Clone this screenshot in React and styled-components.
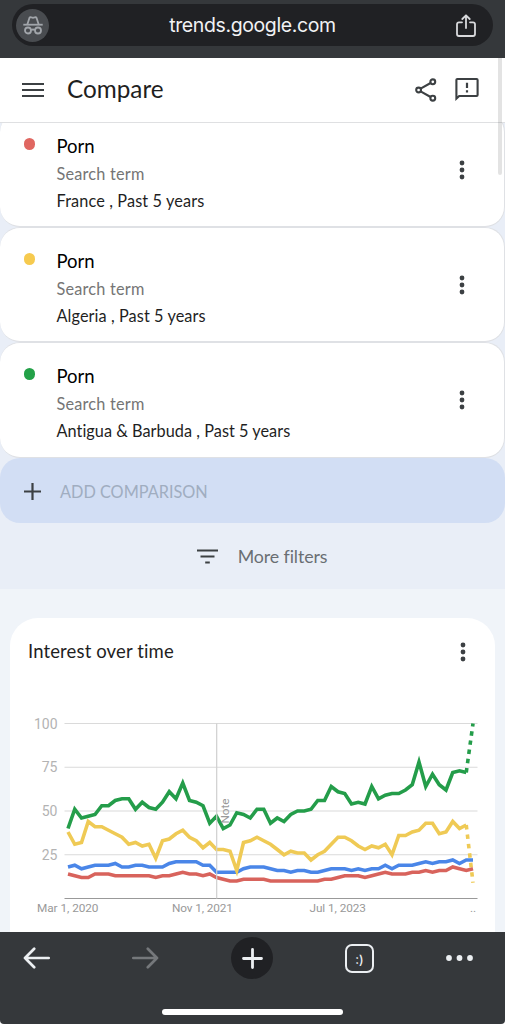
import React from 'react';
import styled, { createGlobalStyle } from 'styled-components';

const Global = createGlobalStyle`
  *, *::before, *::after { box-sizing: border-box; }
  body { margin: 0; background: #fff; }
`;

const Screen = styled.div`
  position: relative;
  width: 505px;
  height: 1024px;
  display: flex;
  flex-direction: column;
  overflow: hidden;
  font-family: Lato, 'Open Sans', sans-serif;
  font-variant-ligatures: none;
  color: #1f1f1f;
`;

const Label = styled.span`
  font-size: ${(p) => p.$size}px;
  line-height: ${(p) => p.$line || 27}px;
  letter-spacing: ${(p) => p.$track || 0}px;
  color: ${(p) => p.$color || '#1f1f1f'};
  white-space: nowrap;
`;

const BrowserBar = styled.div`
  flex: none;
  height: 58px;
  padding: 4px 12px 12px;
  background: #35383b;
`;

const AddressPill = styled.div`
  height: 42px;
  border-radius: 21px;
  background: #202124;
  display: grid;
  grid-template-columns: 42px 1fr 42px;
  align-items: center;
  padding: 0 6px 0 4px;
`;

const Incognito = styled.div`
  width: 33px;
  height: 33px;
  border-radius: 50%;
  background: #494c50;
  display: flex;
  align-items: center;
  justify-content: center;
`;

const Address = styled.span`
  font-family: Inter, sans-serif;
  font-size: 19.5px;
  letter-spacing: -0.38px;
  line-height: 42px;
  padding-left: 2px;
  text-align: center;
  color: #f1f2f4;
`;

const ShareSlot = styled.div`
  display: flex;
  justify-content: center;
`;

const Header = styled.header`
  flex: none;
  height: 65px;
  padding: 0 26px 0 22px;
  background: #fff;
  border-bottom: 1px solid #dfe0e2;
  display: flex;
  align-items: center;
  z-index: 1;
`;

const Title = styled(Label)`
  flex: 1;
  margin: -3px 0 0 23px;
`;

const HeaderActions = styled.div`
  display: flex;
  align-items: center;
  gap: 18px;
`;

const FeedbackSlot = styled.div`
  display: flex;
  margin-top: -2px;
`;

const Terms = styled.section`
  flex: none;
  height: 466px;
  background: #e9eef7;
  overflow: hidden;
`;

const TermCard = styled.article`
  height: 115.2px;
  margin-top: ${(p) => (p.$tucked ? '-11px' : '0')};
  padding: 20px 39.5px 0 23.5px;
  display: flex;
  background: #fff;
  border: 1px solid #dfe1e5;
  border-left: 0;
  border-radius: 20px;
`;

const Dot = styled.span`
  width: 11.5px;
  height: 11.5px;
  margin-top: 5px;
  border-radius: 50%;
  background: ${(p) => p.$color};
`;

const TermText = styled.div`
  flex: 1;
  margin-left: 21.5px;
  display: flex;
  flex-direction: column;
`;

const MenuSlot = styled.div`
  margin-top: 27px;
`;

const AddComparison = styled.div`
  height: 65.8px;
  padding: 3px 24px 0;
  border-radius: 20px;
  background: #d2def4;
  display: flex;
  align-items: center;
  gap: 19px;
`;

const Filters = styled.div`
  height: 66px;
  padding-left: 19px;
  display: flex;
  align-items: center;
  justify-content: center;
  gap: 20px;
`;

const Content = styled.main`
  flex: 1;
  min-height: 0;
  padding: 29px 10px 0 9.5px;
  background: #f0f4f9;
`;

const ChartCard = styled.section`
  height: 100%;
  border-radius: 28px 28px 0 0;
  background: #fff;
`;

const ChartHeader = styled.div`
  height: 67px;
  padding: 0 29.5px 0 18.5px;
  display: flex;
  align-items: center;
  justify-content: space-between;
`;

const Plot = styled.svg`
  display: block;
  width: 486px;
  height: 246px;
  font-family: Roboto, sans-serif;
`;

const BottomBar = styled.footer`
  flex: none;
  height: 92px;
  padding: 5px 32px 0 23px;
  background: #35383b;
  border-radius: 0 0 4px 4px;
`;

const NavRow = styled.nav`
  height: 42px;
  display: flex;
  align-items: center;
  gap: 72px;
`;

const BackSlot = styled.div`
  display: flex;
  margin-right: 8px;
`;

const NewTab = styled.div`
  width: 42px;
  height: 42px;
  border-radius: 50%;
  background: #202124;
  display: flex;
  align-items: center;
  justify-content: center;
`;

const Tabs = styled.div`
  width: 29px;
  height: 29px;
  border: 2.5px solid #eceff2;
  border-radius: 7px;
  color: #eceff2;
  font: 500 12.5px/27px Inter, sans-serif;
  text-align: center;
`;

const HomeIndicator = styled.div`
  width: 181px;
  height: 6px;
  margin: 30px 0 0 139px;
  border-radius: 3px;
  background: #fff;
`;

const ScrollThumb = styled.div`
  position: absolute;
  top: 58px;
  left: 498px;
  width: 3.5px;
  height: 117px;
  border-radius: 0 0 2px 2px;
  background: rgba(0, 0, 0, 0.11);
  z-index: 2;
`;

const IncognitoIcon = () => (
  <svg width="20" height="19" viewBox="0 0 20 19" fill="none" stroke="#a2a6ab" strokeWidth="1.8">
    <path d="M.3 8.7h19.4" />
    <path d="M4.4 8.2L6.5 1.8Q6.8.9 7.6 1.2L10 1.9L12.4 1.2Q13.2.9 13.5 1.8L15.6 8.2" />
    <circle cx="5" cy="14.5" r="3" />
    <circle cx="15" cy="14.5" r="3" />
    <path d="M8 14.1Q10 12.9 12 14.1" />
  </svg>
);

const ExportIcon = () => (
  <svg width="20" height="23" viewBox="0 0 20 23" fill="none" stroke="#d8d9dc" strokeWidth="1.8" strokeLinecap="round" strokeLinejoin="round">
    <path d="M6 8.3H3Q1 8.3 1 10.3V20Q1 22 3 22H17Q19 22 19 20V10.3Q19 8.3 17 8.3H14" />
    <path d="M10 14V1.5M6.3 5L10 1.3L13.7 5" />
  </svg>
);

const MenuIcon = () => (
  <svg width="22" height="16" viewBox="0 0 22 16" stroke="#3c4043" strokeWidth="2">
    <path d="M0 2h22M0 8h22M0 14h22" />
  </svg>
);

const ShareIcon = () => (
  <svg width="22" height="24" viewBox="0 0 22 24" fill="none" stroke="#3c4043" strokeWidth="2.1">
    <path d="M5.6 10.7L15.6 5M5.6 13.3L15.6 19" />
    <circle cx="3.6" cy="12" r="2.4" />
    <circle cx="17.8" cy="3.8" r="2.4" />
    <circle cx="17.8" cy="20.2" r="2.4" />
  </svg>
);

const FeedbackIcon = () => (
  <svg width="24" height="24" viewBox="0 0 24 24" fill="none" stroke="#3c4043" strokeWidth="2.1">
    <path d="M1.4 21.6V3Q1.4 2 2.4 2H21.6Q22.6 2 22.6 3V18Q22.6 19 21.6 19H4.2Z" />
    <path d="M12 5.8v5.2M12 13.2v2.4" strokeWidth="2.2" />
  </svg>
);

const Kebab = styled.svg`
  display: block;
`;

const MoreIcon = () => (
  <Kebab width="6" height="20" viewBox="0 0 6 20" fill="#3c4043">
    <circle cx="3" cy="3" r="2.4" />
    <circle cx="3" cy="10" r="2.4" />
    <circle cx="3" cy="17" r="2.4" />
  </Kebab>
);

const PlusIcon = ({ size, color, width, round }) => (
  <svg width={size} height={size} viewBox={`0 0 ${size} ${size}`} stroke={color} strokeWidth={width} strokeLinecap={round ? 'round' : 'butt'}>
    <path d={`M${round ? 1.5 : 0} ${size / 2}H${size - (round ? 1.5 : 0)}M${size / 2} ${round ? 1.5 : 0}V${size - (round ? 1.5 : 0)}`} />
  </svg>
);

const FilterIcon = () => (
  <svg width="21" height="15" viewBox="0 0 21 15" stroke="#3c4043" strokeWidth="2.1">
    <path d="M0 1.5h21M3.5 7.5h14M8.2 13.5h4.6" />
  </svg>
);

const ArrowIcon = ({ color, flip }) => (
  <svg width="28" height="22" viewBox="0 0 28 22" fill="none" stroke={color} strokeWidth="2.7" strokeLinecap="round" strokeLinejoin="round">
    <path d={flip ? 'M2.3 11H26M16.8 1.8L26 11L16.8 20.2' : 'M25.7 11H2M11.2 1.8L2 11L11.2 20.2'} />
  </svg>
);

const DotsIcon = () => (
  <svg width="27" height="6" viewBox="0 0 27 6" fill="#eceff2">
    <circle cx="3" cy="3" r="2.9" />
    <circle cx="13.5" cy="3" r="2.9" />
    <circle cx="24" cy="3" r="2.9" />
  </svg>
);

const TERMS = [
  { color: '#e06761', place: 'France , Past 5 years', track: 0.12 },
  { color: '#f6ca4f', place: 'Algeria , Past 5 years', track: 0.08 },
  { color: '#23a148', place: 'Antigua & Barbuda , Past 5 years', track: 0.03 },
];

const GREEN = [40, 51, 46, 47, 48, 53, 53, 56, 57, 57, 51, 55, 52, 51, 55, 61, 57, 66, 56, 55, 53, 43, 47, 40, 42, 49, 48, 46, 51, 51, 43, 46, 44, 48, 50, 50, 51, 56, 56, 64, 61, 60, 54, 55, 54, 64, 57, 59, 60, 60, 62, 65, 78, 64, 71, 65, 62, 72, 73, 72, 100];
const YELLOW = [38, 31, 32, 44, 41, 41, 39, 37, 35, 31, 32, 30, 31, 23, 33, 34, 37, 39, 35, 33, 29, 32, 28, 28, 27, 16, 32, 33, 35, 33, 31, 28, 25, 27, 26, 26, 22, 25, 27, 31, 35, 35, 33, 30, 28, 30, 29, 31, 25, 36, 36, 38, 39, 43, 43, 37, 38, 44, 40, 42, 9];
const BLUE = [18, 19, 17, 18, 19, 19, 19, 20, 18, 18, 19, 19, 18, 18, 18, 20, 21, 21, 21, 21, 19, 19, 15, 15, 15, 15, 17, 18, 18, 18, 17, 16, 16, 15, 16, 16, 15, 15, 16, 17, 17, 17, 16, 17, 16, 17, 17, 19, 17, 19, 19, 19, 20, 21, 20, 21, 21, 22, 20, 22, 22];
const RED = [14, 13, 12, 12, 14, 14, 14, 13, 13, 13, 13, 13, 13, 12, 13, 13, 14, 15, 14, 14, 13, 14, 12, 11, 10, 10, 11, 11, 11, 11, 10, 10, 10, 10, 10, 10, 10, 10, 11, 11, 12, 13, 13, 13, 12, 13, 14, 15, 14, 14, 14, 15, 15, 16, 15, 16, 16, 18, 17, 16, 17];

const px = (i) => 67.5 + i * 6.75;
const py = (v) => 898.5 - v * 1.75;
const points = (values, from, to) =>
  values.slice(from, to).map((v, i) => `${px(i + from)},${py(v)}`).join(' ');

const TrendChart = () => (
  <Plot viewBox="9.5 685 486 246">
    {[100, 75, 50, 25].map((v) => (
      <g key={v}>
        <path d={`M64 ${py(v)}H477`} stroke="#dadada" strokeWidth="1.2" />
        <text x="57" y={py(v) + 5} fontSize="14" textAnchor="end" fill="#b3b3b3">{v}</text>
      </g>
    ))}
    <path d="M64 898.5H477" stroke="#999" strokeWidth="1.2" />
    <g fill="none" strokeWidth="3.6">
      <polyline points={points(RED, 0, 61)} stroke="#d8635c" />
      <polyline points={points(BLUE, 0, 61)} stroke="#4a86e8" />
      <polyline points={points(YELLOW, 0, 60)} stroke="#efca55" />
      <polyline points={points(YELLOW, 59, 61)} stroke="#efca55" strokeDasharray="4.5 5" />
      <polyline points={points(GREEN, 0, 60)} stroke="#249d4a" />
      <polyline points={points(GREEN, 59, 61)} stroke="#249d4a" strokeDasharray="4.5 4.8" />
    </g>
    <path d="M216.2 723.5V898.5" stroke="#cfcfcf" strokeWidth="1.2" />
    <text transform="translate(228.5 823.5) rotate(-90)" fontSize="11.8" textLength="25" fill="#999">Note</text>
    <g fontSize="11.8" fill="#999">
      <text x="36.5" y="911.5" textLength="61.5">Mar 1, 2020</text>
      <text x="171.5" y="911.5" textLength="61">Nov 1, 2021</text>
      <text x="309" y="911.5" textLength="56.5">Jul 1, 2023</text>
      <text x="469.5" y="911.5">..</text>
    </g>
  </Plot>
);

export default function App() {
  return (
    <Screen>
      <Global />
      <BrowserBar>
        <AddressPill>
          <Incognito><IncognitoIcon /></Incognito>
          <Address>trends.google.com</Address>
          <ShareSlot><ExportIcon /></ShareSlot>
        </AddressPill>
      </BrowserBar>
      <Header>
        <MenuIcon />
        <Title $size={24.3}>Compare</Title>
        <HeaderActions>
          <ShareIcon />
          <FeedbackSlot><FeedbackIcon /></FeedbackSlot>
        </HeaderActions>
      </Header>
      <Terms>
        {TERMS.map((t, i) => (
          <TermCard key={t.place} $tucked={i === 0}>
            <Dot $color={t.color} />
            <TermText>
              <Label $size={18.5} $color="#000">Porn</Label>
              <Label $size={16.3} $track={0.2} $color="#757575">Search term</Label>
              <Label $size={16.3} $track={t.track}>{t.place}</Label>
            </TermText>
            <MenuSlot><MoreIcon /></MenuSlot>
          </TermCard>
        ))}
        <AddComparison>
          <PlusIcon size={17} color="#3c4043" width={2.2} />
          <Label $size={16.3} $color="#a0adc0">ADD COMPARISON</Label>
        </AddComparison>
        <Filters>
          <FilterIcon />
          <Label $size={17.8} $track={-0.1} $color="#6a6e73">More filters</Label>
        </Filters>
      </Terms>
      <Content>
        <ChartCard>
          <ChartHeader>
            <Label $size={18.5} $track={0.13}>Interest over time</Label>
            <MoreIcon />
          </ChartHeader>
          <TrendChart />
        </ChartCard>
      </Content>
      <BottomBar>
        <NavRow>
          <BackSlot><ArrowIcon color="#eceff2" /></BackSlot>
          <ArrowIcon color="#75787b" flip />
          <NewTab><PlusIcon size={21} color="#eceff2" width={2.8} round /></NewTab>
          <Tabs>:)</Tabs>
          <DotsIcon />
        </NavRow>
        <HomeIndicator />
      </BottomBar>
      <ScrollThumb />
    </Screen>
  );
}
